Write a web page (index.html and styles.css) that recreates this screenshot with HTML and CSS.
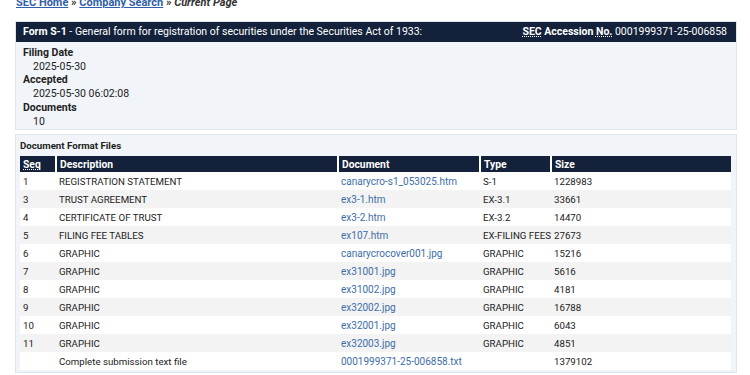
FILE: index.html
```html
<!DOCTYPE html>
<html lang="en">
<head>
    <meta charset="UTF-8">
    <title>EDGAR Filing Index</title>
    <link rel="stylesheet" href="styles.css">
</head>
<body>

<div class="crumbs">
    <a href="#">SEC Home</a> &raquo; <a href="#">Company Search</a> &raquo; <i>Current Page</i>
</div>

<div class="filing">
    <div class="filing-head">
        <div><b>Form S-1</b> - General form for registration of securities under the Securities Act of 1933:</div>
        <div><b><abbr>SEC</abbr> Accession <abbr>No.</abbr></b> 0001999371-25-006858</div>
    </div>
    <div class="filing-info">
        <div class="label">Filing Date</div>
        <div class="value">2025-05-30</div>
        <div class="label">Accepted</div>
        <div class="value">2025-05-30 06:02:08</div>
        <div class="label">Documents</div>
        <div class="value">10</div>
    </div>
</div>

<div class="docs">
    <div class="docs-title">Document Format Files</div>
    <table class="doc-table">
        <tr>
            <th class="col-seq"><abbr>Seq</abbr></th>
            <th class="col-desc">Description</th>
            <th class="col-doc">Document</th>
            <th class="col-type">Type</th>
            <th>Size</th>
        </tr>
        <tr><td>1</td><td>REGISTRATION STATEMENT</td><td><a href="#">canarycro-s1_053025.htm</a></td><td>S-1</td><td>1228983</td></tr>
        <tr><td>3</td><td>TRUST AGREEMENT</td><td><a href="#">ex3-1.htm</a></td><td>EX-3.1</td><td>33661</td></tr>
        <tr><td>4</td><td>CERTIFICATE OF TRUST</td><td><a href="#">ex3-2.htm</a></td><td>EX-3.2</td><td>14470</td></tr>
        <tr><td>5</td><td>FILING FEE TABLES</td><td><a href="#">ex107.htm</a></td><td>EX-FILING FEES</td><td>27673</td></tr>
        <tr><td>6</td><td>GRAPHIC</td><td><a href="#">canarycrocover001.jpg</a></td><td>GRAPHIC</td><td>15216</td></tr>
        <tr><td>7</td><td>GRAPHIC</td><td><a href="#">ex31001.jpg</a></td><td>GRAPHIC</td><td>5616</td></tr>
        <tr><td>8</td><td>GRAPHIC</td><td><a href="#">ex31002.jpg</a></td><td>GRAPHIC</td><td>4181</td></tr>
        <tr><td>9</td><td>GRAPHIC</td><td><a href="#">ex32002.jpg</a></td><td>GRAPHIC</td><td>16788</td></tr>
        <tr><td>10</td><td>GRAPHIC</td><td><a href="#">ex32001.jpg</a></td><td>GRAPHIC</td><td>6043</td></tr>
        <tr><td>11</td><td>GRAPHIC</td><td><a href="#">ex32003.jpg</a></td><td>GRAPHIC</td><td>4851</td></tr>
        <tr><td></td><td>Complete submission text file</td><td><a href="#">0001999371-25-006858.txt</a></td><td></td><td>1379102</td></tr>
    </table>
</div>

</body>
</html>
```

FILE: styles.css
```css
body { margin: 0; padding: 0 13px 0 15px; font-family: Roboto, "Liberation Sans", Arial, sans-serif; font-size: 10.5px; color: #222; background: #fff; }
a { color: #3d6ea8; text-decoration: none; }
abbr { text-decoration: underline dotted; }

.crumbs { height: 25px; line-height: 14px; margin-top: -4px; font-weight: bold; font-size: 11px; color: #333; padding-left: 1px; }
.crumbs a { color: #2f5fa8; text-decoration: underline; }

.filing { border: 1px solid #dfe5ec; background: #f1f5f9; margin-bottom: 4px; }
.filing-head { display: flex; justify-content: space-between; background: #13223a; color: #fff; height: 20px; line-height: 20px; padding: 0 9px 0 7px; font-size: 10.5px; }
.filing-info { padding: 4px 7px 1px; line-height: 13.7px; }
.filing-info .label { font-weight: bold; }
.filing-info .value { padding-left: 10px; }

.docs { border: 1px solid #dfe5ec; background: #f1f5f9; padding: 5px 5px 2px 4px; }
.docs-title { font-weight: bold; font-size: 9.7px; line-height: 12px; margin-bottom: 4px; }
.doc-table { width: 100%; table-layout: fixed; border-collapse: collapse; font-size: 9.7px; background: #fff; }
.doc-table th { background: #13223a; color: #fff; text-align: left; font-weight: bold; height: 16px; padding: 0 3px; border-left: 2px solid #fff; font-size: 10.3px; }
.doc-table th:first-child { border-left: none; }
.doc-table td { height: 18px; padding: 0 3px; white-space: nowrap; }
.doc-table td a { font-size: 10px; }
.doc-table tr:nth-child(odd) td { background: #f3f3f3; }
.col-seq { width: 29px; }
.col-desc { width: 274px; }
.col-doc { width: 134px; }
.col-type { width: 63px; }
```
